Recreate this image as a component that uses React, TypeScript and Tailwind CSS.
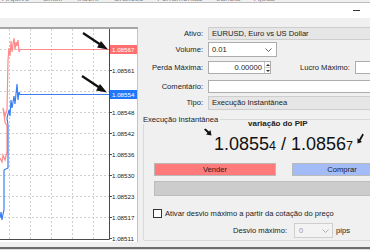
import React from "react";

const FONT = { fontFamily: '"Liberation Sans", Arial, sans-serif' };

// grid rows every ~21px, first on the ask price
const GRID_Y = [20.5, 41.5, 62.5, 83.5, 104.5, 125.5, 146.5, 167.5, 188.5, 209.5];
const GRID_X = [9.5, 30.5, 51.5, 72.5, 93.5];
const LABELS = [
    "1.08567",
    "1.08561",
    "1.08555",
    "1.08548",
    "1.08542",
    "1.08536",
    "1.08530",
    "1.08523",
    "1.08517",
    "1.08511",
];

// page coords, shifted by -29 when drawn
const ASK: [number, number][] = [
    [0, 158], [2, 162], [3, 155], [5, 160], [7, 152], [7, 126], [5, 122], [3, 108],
    [5, 116], [7, 110], [8, 60], [9, 48], [10, 56], [11, 41], [12, 52], [13, 44],
    [14, 38], [15, 50], [16, 42], [17, 46], [18, 40], [19, 52], [20, 49.5], [109, 49.5],
];
const BID: [number, number][] = [
    [0, 218], [1, 212], [2, 220], [3, 214], [4, 210], [4, 170], [8, 168], [8, 125],
    [7, 118], [9, 110], [10, 116], [11, 100], [12, 108], [14, 96], [15, 104], [17, 84],
    [18, 100], [19, 92], [20, 94.5], [109, 94.5],
];

const toPoints = (pts: [number, number][]) =>
    pts.map(([x, y]) => `${x},${y - 29}`).join(" ");

const Chart = () => (
    <svg width={138} height={213} viewBox="0 0 138 213" className="block">
        <rect x={0} y={0} width={138} height={213} fill="#ffffff" />
        {GRID_X.map((x) => (
            <line key={x} x1={x} y1={0} x2={x} y2={210} stroke="#cfcfcf" strokeDasharray="2 2" />
        ))}
        {GRID_Y.slice(0, 9).map((y) => (
            <line key={y} x1={0} y1={y} x2={109} y2={y} stroke="#cfcfcf" strokeDasharray="2 2" />
        ))}
        <line x1={109.5} y1={0} x2={109.5} y2={210.5} stroke="#4a4a4a" />
        <line x1={0} y1={210.5} x2={109.5} y2={210.5} stroke="#4a4a4a" />
        <line x1={137.5} y1={0} x2={137.5} y2={213} stroke="#c4c4c4" />
        {GRID_Y.map((y, i) => (
            <g key={i}>
                <line x1={109} y1={y} x2={112} y2={y} stroke="#4a4a4a" />
                <text x={112} y={y + 2.2} fontSize={6.2} fill="#222" style={FONT}>
                    {LABELS[i]}
                </text>
            </g>
        ))}
        <polyline points={toPoints(ASK)} fill="none" stroke="#ff8a8a" strokeWidth={1.2} />
        <polyline points={toPoints(BID)} fill="none" stroke="#3a7ef3" strokeWidth={1.2} />
        <rect x={110} y={16} width={27} height={9} fill="#ff6f6f" />
        <text x={112} y={22.8} fontSize={6.2} fill="#fff" style={FONT}>
            1.08567
        </text>
        <rect x={110} y={61} width={27} height={9} fill="#1f78fa" />
        <text x={112} y={67.8} fontSize={6.2} fill="#fff" style={FONT}>
            1.08554
        </text>
        {/* annotation arrows */}
        <line x1={83} y1={4} x2={101} y2={16} stroke="#111" strokeWidth={2.2} />
        <polygon points="108,20.5 97,18.5 101,12" fill="#111" />
        <line x1={82} y1={47} x2={100} y2={59} stroke="#111" strokeWidth={2.2} />
        <polygon points="107,63.5 96,61.5 100,55" fill="#111" />
    </svg>
);

const Row = ({
    label,
    className,
    children,
}: {
    label: string;
    className?: string;
    children: React.ReactNode;
}) => (
    <div className={`flex flex-row items-center ${className ?? ""}`}>
        <div className="w-[65px] shrink-0 whitespace-nowrap text-right">{label}</div>
        <div className="ml-[5px] flex shrink-0 flex-row items-center whitespace-nowrap">{children}</div>
    </div>
);

const Chevron = ({ color }: { color: string }) => (
    <svg width={7} height={4} viewBox="0 0 7 4">
        <polyline points="0.5,0.5 3.5,3.5 6.5,0.5" fill="none" stroke={color} strokeWidth={0.9} />
    </svg>
);

const Spinner = () => (
    <div className="flex h-full w-[6px] shrink-0 flex-col border-l border-[#c9c9c9]">
        <div className="flex flex-1 items-center justify-center border-b border-[#c9c9c9]">
            <svg width={4} height={2} viewBox="0 0 4 2">
                <polygon points="0,2 2,0 4,2" fill="#333" />
            </svg>
        </div>
        <div className="flex flex-1 items-center justify-center">
            <svg width={4} height={2} viewBox="0 0 4 2">
                <polygon points="0,0 4,0 2,2" fill="#333" />
            </svg>
        </div>
    </div>
);

export default function App() {
    return (
        <div
            className="flex h-[250px] w-[370px] flex-col overflow-hidden bg-[#f0f0f0] text-[7.6px] text-[#1b1b1b]"
            style={FONT}
        >
            {/* menu bar, cut off at the top */}
            <div className="h-[3px] overflow-hidden border-b border-[#bdbdbd]">
                <div className="-mt-[7px] flex flex-row gap-[14px] pl-[2px] text-[8px] text-[#8a8a8a]">
                    <span>Arquivo</span>
                    <span>Exibir</span>
                    <span>Inserir</span>
                    <span>Gráficos</span>
                    <span>Ferramentas</span>
                    <span>Janela</span>
                    <span>Ajuda</span>
                </div>
            </div>

            {/* title bar */}
            <div className="flex h-[15px] flex-row items-center justify-end bg-white pr-[10px]">
                <div className="h-px w-[7px] bg-[#333]" />
            </div>

            <div className="flex flex-1 flex-row pt-[9px]">
                {/* chart window */}
                <div className="w-[138px] shrink-0">
                    <div className="border-t-2 border-[#a6a6a6]">
                        <Chart />
                    </div>
                </div>

                {/* order panel */}
                <div className="flex min-w-0 flex-1 flex-col overflow-hidden">
                    <Row label="Ativo:">
                        <div className="flex h-[13px] w-[200px] items-center border border-[#cdcdcd] bg-[#e6e6e6] pl-[3px]">
                            EURUSD, Euro vs US Dollar
                        </div>
                    </Row>
                    <Row label="Volume:" className="mt-[2px]">
                        <div className="flex h-[15px] w-[69px] flex-row items-center justify-between border border-[#adadad] bg-white pl-[3px] pr-[4px]">
                            <span>0.01</span>
                            <Chevron color="#555" />
                        </div>
                    </Row>
                    <Row label="Perda Máxima:" className="mt-[4px]">
                        <div className="flex h-[13px] w-[63px] shrink-0 flex-row items-center border border-[#adadad] bg-white">
                            <span className="flex-1 pr-[2px] text-right">0.00000</span>
                            <Spinner />
                        </div>
                        <span className="ml-[29px] shrink-0">Lucro Máximo:</span>
                        <div className="ml-[5px] h-[13px] w-[40px] shrink-0 border border-[#adadad] bg-white" />
                    </Row>
                    <Row label="Comentário:" className="mt-[6px]">
                        <div className="h-[13px] w-[200px] border border-[#adadad] bg-white" />
                    </Row>
                    <Row label="Tipo:" className="mt-[3px]">
                        <div className="flex h-[14px] w-[200px] items-center border border-[#cdcdcd] bg-[#e6e6e6] pl-[3px]">
                            Execução Instantânea
                        </div>
                    </Row>

                    {/* group box */}
                    <div className="relative ml-[5px] mt-[9px] flex h-[122px] w-[260px] shrink-0 flex-col rounded-[2px] border border-[#d9d9d9]">
                        <span className="absolute -top-[5px] -left-px bg-[#f0f0f0] pr-[2px] leading-[9px]">
                            Execução Instantânea
                        </span>
                        <div className="pl-[104px] text-[8px] font-bold leading-[8px] text-[#222]">
                            variação do PIP
                        </div>
                        <div className="mt-[7px] whitespace-nowrap pl-[70px] text-[18px] leading-none text-[#111]">
                            1.0855<span className="text-[12.5px]">4</span> / 1.0856
                            <span className="text-[12.5px]">7</span>
                        </div>
                        <svg
                            width={8}
                            height={8}
                            viewBox="0 0 8 8"
                            className="absolute left-[60px] top-[8px]"
                        >
                            <polygon points="7.5,7.5 2,6.5 3.5,5 0,1.5 1.5,0.5 5,3.5 6.5,2" fill="#111" />
                        </svg>
                        <svg
                            width={7}
                            height={11}
                            viewBox="0 0 7 11"
                            className="absolute left-[213px] top-[13px]"
                        >
                            <polygon points="0.5,10.5 0.5,5 2,6.5 5.5,0.5 6.8,1.8 3.5,7.8 5,9" fill="#111" />
                        </svg>

                        <div className="ml-[10px] mt-[10px] flex flex-row">
                            <div className="flex h-[13px] w-[122px] shrink-0 items-center justify-center border border-[#b9b9b9] bg-[#ff7b7b]">
                                Vender
                            </div>
                            <div className="ml-[16px] flex h-[13px] w-[100px] shrink-0 items-center justify-center border border-[#b9b9b9] bg-[#a3bcf8]">
                                Comprar
                            </div>
                        </div>
                        <div className="ml-[10px] mt-[5px] h-[15px] w-[250px] shrink-0 border border-[#bdbdbd] bg-[#cccccc]" />

                        <div className="ml-[9px] mt-[12px] flex flex-row items-center whitespace-nowrap">
                            <div className="h-[9px] w-[9px] shrink-0 border border-[#333] bg-white" />
                            <span className="ml-[3px]">Ativar desvio máximo a partir da cotação do preço</span>
                        </div>

                        <div className="mt-[4px] flex flex-row items-center whitespace-nowrap">
                            <div className="w-[143px] shrink-0 text-right">Desvio máximo:</div>
                            <div className="ml-[7px] flex h-[15px] w-[39px] shrink-0 flex-row items-center justify-between border border-[#cfcfcf] bg-[#f3f3f3] pl-[4px] pr-[3px] text-[#9a9a9a]">
                                <span>0</span>
                                <Chevron color="#a8a8a8" />
                            </div>
                            <span className="ml-[3px]">pips</span>
                        </div>
                    </div>
                </div>
            </div>

            <div className="h-[3px] border-t-2 border-[#6e6e6e] bg-[#dcdcdc]" />
        </div>
    );
}
